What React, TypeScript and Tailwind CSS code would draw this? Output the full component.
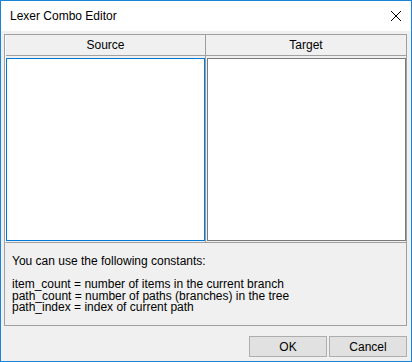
import React from "react";

export default function App() {
  const font = { fontFamily: '"Liberation Sans", Arial, sans-serif' };
  return (
    <div
      className="w-[412px] h-[362px] border border-[#1883d7] flex flex-col bg-[#f0f0f0] text-black text-[12px]"
      style={font}
    >
      {/* Title bar */}
      <div className="h-[30px] bg-white flex items-center justify-between pl-[9px] pr-[8px] shrink-0">
        <span className="text-[12px] leading-none">Lexer Combo Editor</span>
        <svg width="12" height="12" viewBox="0 0 12 12" className="mr-[1px]">
          <path d="M1 1 L11 11 M11 1 L1 11" stroke="#000" strokeWidth="1" />
        </svg>
      </div>
      {/* Body */}
      <div className="flex-1 flex flex-col pt-[3px] pl-[3px] pr-[4px] pb-[5px]">
        <div className="border border-[#a0a0a0] flex flex-col h-[292px]">
          {/* Grid */}
          <div className="flex flex-col border-b border-[#a0a0a0] border-l border-l-white">
            <div className="flex h-[21px] border-b border-[#a0a0a0]">
              <div className="w-[200px] border-r border-[#a0a0a0] flex items-center justify-center">
                Source
              </div>
              <div className="flex-1 flex items-center justify-center">Target</div>
            </div>
            <div className="flex h-[186px]">
              <div className="w-[200px] border-r border-[#a0a0a0] pl-[0px] pt-[2px] pb-[1px]">
                <div className="w-full h-full bg-white border border-[#0078d7]" />
              </div>
              <div className="flex-1 pl-[1px] pt-[2px] pb-[1px]">
                <div className="w-full h-full bg-white border border-[#7a7a7a]" />
              </div>
            </div>
          </div>
          {/* Description */}
          <div className="flex-1 pl-[7px] pt-[13px] leading-[11.5px] whitespace-pre">
            {"You can use the following constants:\n\nitem_count = number of items in the current branch\npath_count = number of paths (branches) in the tree\npath_index = index of current path"}
          </div>
        </div>
        {/* Buttons */}
        <div className="flex justify-end gap-[2px] mt-[10px] mr-[0px]">
          <button className="w-[78px] h-[21px] bg-[#e1e1e1] border border-[#adadad] text-[12px] leading-none">
            OK
          </button>
          <button className="w-[78px] h-[21px] bg-[#e1e1e1] border border-[#adadad] text-[12px] leading-none">
            Cancel
          </button>
        </div>
      </div>
    </div>
  );
}
